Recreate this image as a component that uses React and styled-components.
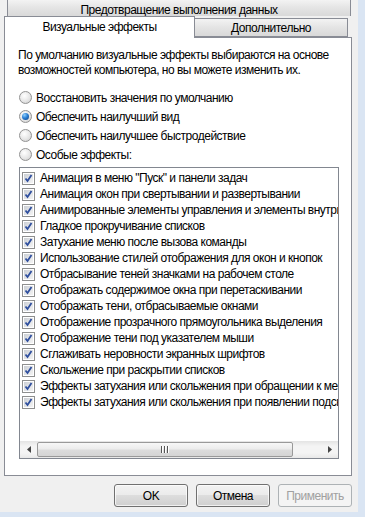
import React from 'react';
import styled, { createGlobalStyle } from 'styled-components';

const GlobalStyle = createGlobalStyle`
    html, body {
        margin: 0;
        padding: 0;
        background: #dae5f3;
    }
    * {
        box-sizing: border-box;
    }
`

const Window = styled.div`
    width: 365px;
    height: 517px;
    background: #dae5f3;
    overflow: hidden;
    font-family: "Liberation Sans", Arial, sans-serif;
    font-size: 12px;
    letter-spacing: -0.5px;
    color: #000;
`
const Dialog = styled.div`
    width: 358px;
    height: 512px;
    background: #f0f0f0;
    padding-left: 4px;
    display: flex;
    flex-direction: column;
`
const BackRow = styled.div`
    margin-left: 3px;
    width: 344px;
    height: 16px;
    border: 1px solid #898c95;
    border-top: none;
    border-bottom: none;
    background: linear-gradient(#f3f3f3, #e4e4e4 50%, #d9d9d9);
    text-align: center;
    padding-top: 3px;
    line-height: 14px;
`
const FrontRow = styled.div`
    display: flex;
    align-items: flex-end;
    height: 21px;
    position: relative;
    z-index: 1;
`
const Tab = styled.div`
    height: ${p => p.$active ? '22px' : '19px'};
    width: ${p => p.$width}px;
    border: 1px solid #898c95;
    border-bottom: ${p => p.$active ? 'none' : '1px solid #898c95'};
    border-left: ${p => p.$active ? '1px solid #898c95' : 'none'};
    background: ${p => p.$active ? '#fff' : 'linear-gradient(#f3f3f3, #e4e4e4 50%, #d9d9d9)'};
    margin-bottom: ${p => p.$active ? '-1px' : '0'};
    text-align: center;
    padding-top: ${p => p.$active ? '3px' : '2px'};
    line-height: 15px;
`
const Panel = styled.div`
    width: 348px;
    height: 439px;
    background: #fff;
    border: 1px solid #898c95;
    padding: 10px 0 0 13px;
    display: flex;
    flex-direction: column;
`
const Intro = styled.p`
    margin: 0;
    line-height: 15px;
    width: 330px;
`
const Options = styled.div`
    margin-top: 10px;
    display: flex;
    flex-direction: column;
`
const RadioRow = styled.label`
    display: flex;
    align-items: center;
    height: 19px;
    gap: 4px;
    padding-left: 1px;
`
const RadioBox = styled.span`
    width: 13px;
    height: 13px;
    border-radius: 50%;
    border: 1px solid #929292;
    background: radial-gradient(circle at 40% 35%, #ffffff 0%, #e6e6e6 55%, #c9c9c9 100%);
    display: flex;
    align-items: center;
    justify-content: center;
    flex-shrink: 0;
`
const RadioDot = styled.span`
    width: 7px;
    height: 7px;
    border-radius: 50%;
    background: radial-gradient(circle at 35% 30%, #8fd0ff 0%, #2a7fd4 45%, #0b3a7a 100%);
`
const List = styled.div`
    margin-top: 3px;
    margin-left: 1px;
    width: 320px;
    height: 292px;
    border: 1px solid #828790;
    display: flex;
    flex-direction: column;
    overflow: hidden;
`
const Items = styled.div`
    flex: 1;
    padding: 2px 0 0 2px;
    overflow: hidden;
`
const Item = styled.div`
    display: flex;
    align-items: center;
    height: 16px;
    gap: 5px;
    white-space: nowrap;
`
const Check = styled.span`
    width: 13px;
    height: 13px;
    flex-shrink: 0;
    border: 1px solid #8e8f8f;
    background: #fff;
    padding: 1px;
    display: flex;
`
const CheckInner = styled.span`
    flex: 1;
    background: linear-gradient(135deg, #cbcfd5, #f4f4f4);
    display: flex;
    align-items: center;
    justify-content: center;
`
const Scroll = styled.div`
    height: 17px;
    display: flex;
    align-items: stretch;
    background: linear-gradient(#e4e4e4, #f4f4f4 30%, #f4f4f4 70%, #e8e8e8);
`
const Arrow = styled.div`
    width: 17px;
    display: flex;
    align-items: center;
    justify-content: center;
`
const Thumb = styled.div`
    width: 256px;
    margin: 1px 0;
    border: 1px solid #999;
    border-radius: 2px;
    background: linear-gradient(#f7f7f7, #ececec 45%, #dcdcdc 55%, #d4d4d4);
    display: flex;
    align-items: center;
    justify-content: center;
    gap: 1px;
`
const Grip = styled.span`
    width: 1px;
    height: 7px;
    background: #555;
    box-shadow: 1px 0 0 #fff;
    margin-right: 1px;
`
const Track = styled.div`
    flex: 1;
`
const Buttons = styled.div`
    display: flex;
    justify-content: flex-end;
    gap: 8px;
    width: 348px;
    margin-top: 8px;
`
const Button = styled.button`
    width: 74px;
    height: 23px;
    font: inherit;
    letter-spacing: inherit;
    color: ${p => p.disabled ? '#a0a0a0' : '#000'};
    border: 1px solid ${p => p.disabled ? '#adb2b5' : '#707070'};
    border-radius: 3px;
    background: ${p => p.disabled ? '#f4f4f4' : 'linear-gradient(#f2f2f2, #ebebeb 50%, #dddddd 50%, #cfcfcf)'};
    box-shadow: inset 0 0 0 1px ${p => p.disabled ? '#f4f4f4' : 'rgba(255,255,255,0.7)'};
    padding: 0;
`

const items = [
    'Анимация в меню "Пуск" и панели задач',
    'Анимация окон при свертывании и развертывании',
    'Анимированные элементы управления и элементы внутри окна',
    'Гладкое прокручивание списков',
    'Затухание меню после вызова команды',
    'Использование стилей отображения для окон и кнопок',
    'Отбрасывание теней значками на рабочем столе',
    'Отображать содержимое окна при перетаскивании',
    'Отображать тени, отбрасываемые окнами',
    'Отображение прозрачного прямоугольника выделения',
    'Отображение тени под указателем мыши',
    'Сглаживать неровности экранных шрифтов',
    'Скольжение при раскрытии списков',
    'Эффекты затухания или скольжения при обращении к меню',
    'Эффекты затухания или скольжения при появлении подсказок',
];

const radios = [
    'Восстановить значения по умолчанию',
    'Обеспечить наилучший вид',
    'Обеспечить наилучшее быстродействие',
    'Особые эффекты:',
];

function CheckMark() {
    return (
        <svg width="9" height="9" viewBox="0 0 9 9">
            <path d="M1.5 4.5 L3.5 7 L7.5 1" stroke="#2f4f9e" strokeWidth="1.8" fill="none" />
        </svg>
    )
}

export default function App() {
    return (
        <Window>
            <GlobalStyle />
            <Dialog>
                <BackRow>Предотвращение выполнения данных</BackRow>
                <FrontRow>
                    <Tab $active $width={191}>Визуальные эффекты</Tab>
                    <Tab $width={153}>Дополнительно</Tab>
                </FrontRow>
                <Panel>
                    <Intro>По умолчанию визуальные эффекты выбираются на основе возможностей компьютера, но вы можете изменить их.</Intro>
                    <Options>
                        {radios.map((r, i) => (
                            <RadioRow key={r}>
                                <RadioBox>{i === 1 && <RadioDot />}</RadioBox>
                                {r}
                            </RadioRow>
                        ))}
                    </Options>
                    <List>
                        <Items>
                            {items.map(t => (
                                <Item key={t}>
                                    <Check><CheckInner><CheckMark /></CheckInner></Check>
                                    {t}
                                </Item>
                            ))}
                        </Items>
                        <Scroll>
                            <Arrow>
                                <svg width="4" height="7" viewBox="0 0 4 7"><path d="M4 0 L0 3.5 L4 7 Z" fill="#444" /></svg>
                            </Arrow>
                            <Thumb>
                                <Grip /><Grip /><Grip />
                            </Thumb>
                            <Track />
                            <Arrow>
                                <svg width="4" height="7" viewBox="0 0 4 7"><path d="M0 0 L4 3.5 L0 7 Z" fill="#444" /></svg>
                            </Arrow>
                        </Scroll>
                    </List>
                </Panel>
                <Buttons>
                    <Button>OK</Button>
                    <Button>Отмена</Button>
                    <Button disabled>Применить</Button>
                </Buttons>
            </Dialog>
        </Window>
    )
}
